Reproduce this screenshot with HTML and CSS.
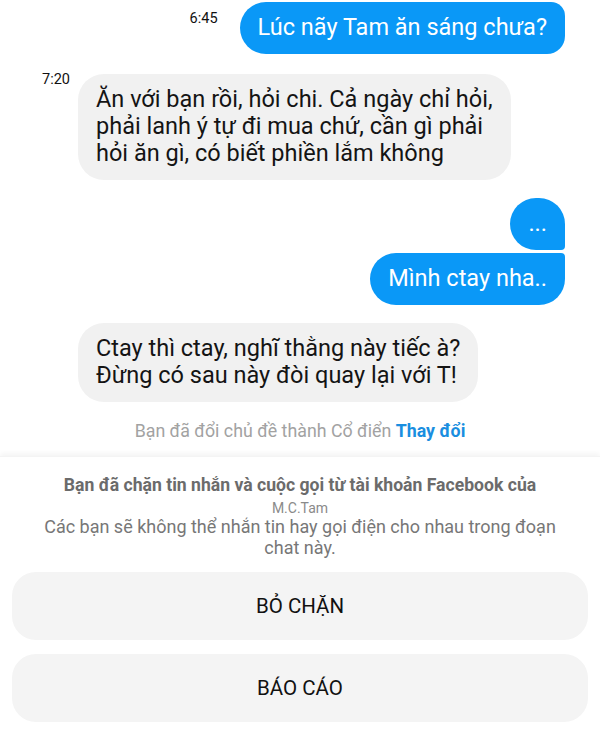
FILE: index.html
```html
<!DOCTYPE html>
<html lang="vi">
<head>
<meta charset="utf-8">
<link rel="stylesheet" href="styles.css">
</head>
<body>
<div class="screen">
  <div class="chat">
    <div class="row row-out first">
      <span class="time time-out">6:45</span>
      <div class="bubble out solo">Lúc nãy Tam ăn sáng chưa?</div>
    </div>
    <div class="row row-in gap">
      <span class="time time-in">7:20</span>
      <div class="bubble in">Ăn với bạn rồi, hỏi chi. Cả ngày chỉ hỏi,<br>phải lanh ý tự đi mua chứ, cần gì phải<br>hỏi ăn gì, có biết phiền lắm không</div>
    </div>
    <div class="row row-out gap-sm">
      <div class="bubble out group-first">...</div>
    </div>
    <div class="row row-out tight">
      <div class="bubble out group-last">Mình ctay nha..</div>
    </div>
    <div class="row row-in gap-sm">
      <span class="time time-in"></span>
      <div class="bubble in">Ctay thì ctay, nghĩ thằng này tiếc à?<br>Đừng có sau này đòi quay lại với T!</div>
    </div>
    <p class="note">Bạn đã đổi chủ đề thành Cổ điển <span class="note-link">Thay đổi</span></p>
  </div>
  <div class="footer">
    <p class="block-title">Bạn đã chặn tin nhắn và cuộc gọi từ tài khoản Facebook của</p>
    <p class="block-name">M.C.Tam</p>
    <p class="block-desc">Các bạn sẽ không thể nhắn tin hay gọi điện cho nhau trong đoạn chat này.</p>
    <div class="actions">
      <div class="action">BỎ CHẶN</div>
      <div class="action">BÁO CÁO</div>
    </div>
  </div>
</div>
</body>
</html>
```
FILE: styles.css
```css
* { box-sizing: border-box; }
html, body {
  margin: 0;
  padding: 0;
  background: #ffffff;
}
body {
  font-family: Roboto, "Noto Sans", "Liberation Sans", sans-serif;
  color: #111111;
  width: 600px;
  height: 736px;
  overflow: hidden;
}
.screen {
  width: 600px;
}
.chat {
  padding: 2px 35px 0 42px;
  display: flex;
  flex-direction: column;
}
.row {
  display: flex;
  align-items: flex-start;
}
.row-out { justify-content: flex-end; }
.row-in { justify-content: flex-start; }
.gap { margin-top: 20px; }
.gap-sm { margin-top: 18px; }
.tight { margin-top: 3px; }
.time {
  font-size: 14.5px;
  line-height: 16px;
  color: #111111;
}
.time-out {
  margin-top: 9px;
  margin-right: 22px;
}
.time-in {
  width: 36px;
  margin-top: -2px;
}
.bubble {
  font-size: 23.5px;
  line-height: 27px;
  padding: 12px 18px 13px;
  border-radius: 26px;
}
.out {
  background: #0a98f7;
  color: #ffffff;
}
.in {
  background: #f1f1f1;
  color: #141414;
}
.solo { border-radius: 26px 14px 18px 26px; }
.group-first { border-radius: 26px 26px 4px 26px; }
.group-last { border-radius: 26px 4px 26px 26px; }
.note {
  margin: 19px -35px 0 -42px;
  text-align: center;
  font-size: 17.8px;
  line-height: 20px;
  color: #a2a2a2;
}
.note-link {
  color: #1a8ee0;
  font-weight: 700;
}
.footer {
  margin-top: 15px;
  padding: 18px 12px 0;
  box-shadow: 0 -3px 5px rgba(0, 0, 0, 0.045);
  border-top: 1px solid #f4f4f4;
  text-align: center;
}
.block-title {
  margin: 0;
  font-size: 17.6px;
  line-height: 20px;
  font-weight: 700;
  color: #6b6b6b;
}
.block-name {
  margin: 5px 0 0;
  font-size: 14px;
  line-height: 16px;
  color: #8a8a8a;
}
.block-desc {
  margin: 0;
  padding: 0 22px;
  font-size: 18px;
  line-height: 21px;
  color: #777777;
}
.actions {
  margin-top: 14px;
  display: flex;
  flex-direction: column;
  gap: 14px;
}
.action {
  height: 68px;
  border-radius: 24px;
  background: #f4f4f4;
  display: flex;
  align-items: center;
  justify-content: center;
  font-size: 20.5px;
  font-weight: 400;
  color: #111111;
}
```
